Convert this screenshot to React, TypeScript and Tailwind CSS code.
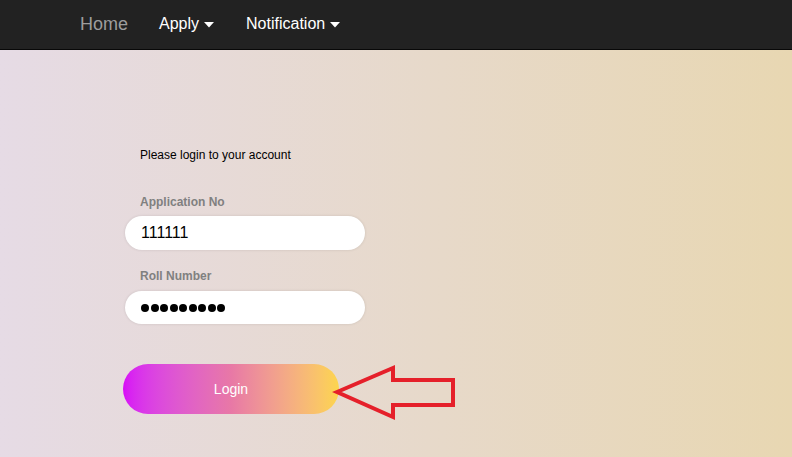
function Caret() {
  return (
    <svg width="10" height="6" viewBox="0 0 10 6" className="ml-[5px] mt-[2px]">
      <path d="M0 0 L10 0 L5 5.5 Z" fill="currentColor" />
    </svg>
  );
}

export default function App() {
  return (
    <div className="w-[792px] h-[457px] overflow-hidden font-['Liberation_Sans',Arial,sans-serif]">
      {/* Navbar */}
      <nav className="h-[50px] bg-[#222222] border-b border-[#080808] flex items-center pb-[2px]">
        <span className="ml-[80px] text-[18px] text-[#9d9d9d] leading-none">Home</span>
        <span className="ml-[31px] flex items-center text-[16px] text-white leading-none">
          Apply <Caret />
        </span>
        <span className="ml-[32px] flex items-center text-[16px] text-white leading-none">
          Notification <Caret />
        </span>
      </nav>

      {/* Body */}
      <main className="h-[407px] bg-gradient-to-r from-[#e6dbe5] to-[#e8d7b2]">
        <div className="pl-[125px] pt-[98px] w-[500px]">
          <p className="pl-[15px] text-[12px] text-black leading-[14px]">Please login to your account</p>

          <label className="block pl-[15px] mt-[33px] text-[12px] font-bold text-[#808080] leading-[14px]">
            Application No
          </label>
          <div className="mt-[7px] w-[240px] h-[34px] rounded-full bg-white shadow-[0_0_3px_rgba(0,0,0,0.12)] flex items-center pl-[16px] text-[16px] text-black">
            111111
          </div>

          <label className="block pl-[15px] mt-[19px] text-[12px] font-bold text-[#808080] leading-[14px]">
            Roll Number
          </label>
          <div className="mt-[8px] w-[240px] h-[33px] rounded-full bg-white shadow-[0_0_3px_rgba(0,0,0,0.12)] flex items-center pl-[16px] gap-[1.5px]">
            {Array.from({ length: 9 }).map((_, i) => (
              <span key={i} className="w-[8px] h-[8px] rounded-full bg-black" />
            ))}
          </div>

          <div className="mt-[40px] flex items-start ml-[-2px]">
            <button className="w-[216px] h-[50px] rounded-full bg-gradient-to-r from-[#d70af6] via-[#e878a6] to-[#fdd54c] text-white text-[14px]">
              Login
            </button>
            <svg width="128" height="60" viewBox="0 0 128 60" className="ml-[-8px] mt-[-1px]">
              <polygon
                points="6,29 62,5 62,17 122,17 122,42 62,42 62,54"
                fill="none"
                stroke="#e5202a"
                strokeWidth="4"
                strokeLinejoin="miter"
              />
            </svg>
          </div>
        </div>
      </main>
    </div>
  );
}
